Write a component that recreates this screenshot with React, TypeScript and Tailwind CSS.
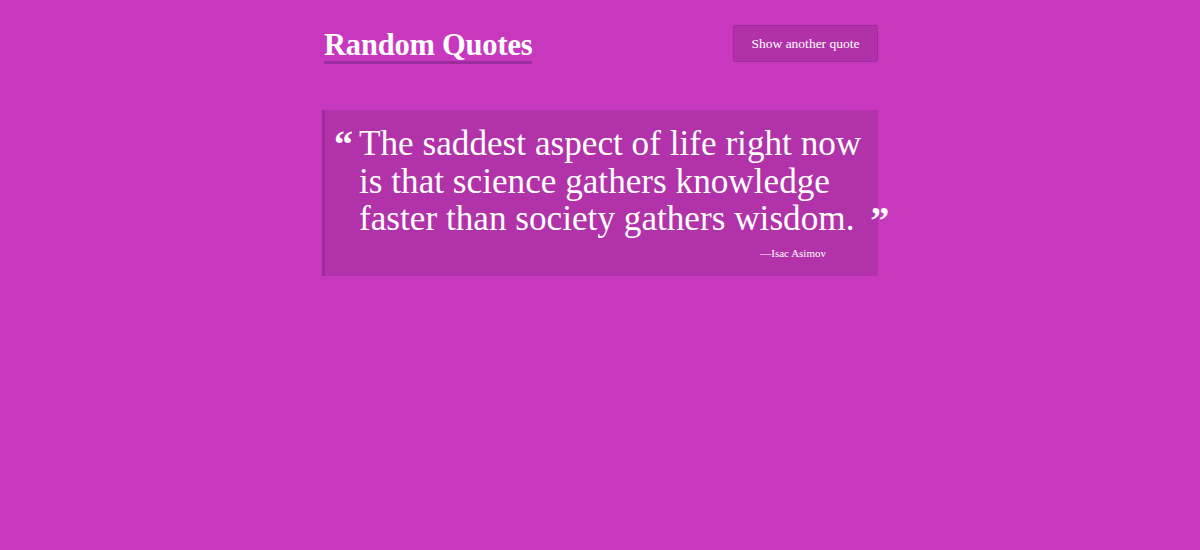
import React from 'react';

const QUOTE = {
  text: 'The saddest aspect of life right now is that science gathers knowledge faster than society gathers wisdom.',
  author: 'Isac Asimov',
};

const App: React.FC = () => {
  return (
    <div className="min-h-[550px] w-full bg-[#c738be] text-white font-['Liberation_Serif',serif]">
      <div className="mx-auto w-[556px] pt-[25px]">
        <header className="flex items-start justify-between">
          <h1 className="mt-[5px] ml-[2px] border-b-[3px] border-[#9c2c9d] text-[30.5px] font-bold leading-[31px] tracking-[-0.2px]">
            Random Quotes
          </h1>
          <button className="h-[37px] w-[145px] rounded-[2px] border border-[#a32aa0] bg-[#b131a8] pt-[1px] text-[13.5px] text-white">
            Show another quote
          </button>
        </header>

        <blockquote className="mt-[46px] h-[166px] border-l-[3px] border-[#9c2c9d] bg-[#b232a9] pt-[15px] pl-[9px]">
          <div className="flex items-start">
            <span className="mt-[7px] w-[25px] text-[38px] font-bold leading-[24px]">“</span>
            <p className="w-[516px] text-[35.2px] leading-[37.5px]">
              {QUOTE.text}{' '}
              <span className="inline-block mr-[-40px] ml-[7px] align-top mt-[8px] text-[38px] font-bold leading-[24px]">”</span>
            </p>
          </div>
          <div className="mt-[8px] pr-[52px] text-right text-[11px] leading-[14px]">—{QUOTE.author}</div>
        </blockquote>
      </div>
    </div>
  );
};

export default App;
